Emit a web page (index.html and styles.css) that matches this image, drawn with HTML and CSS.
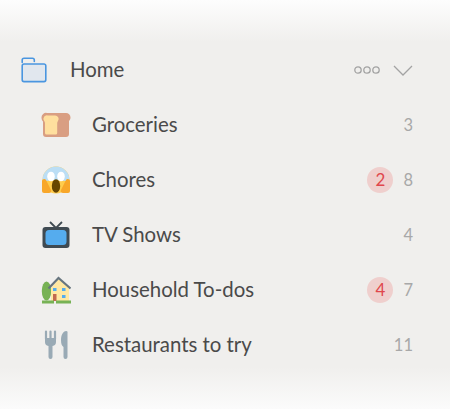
FILE: index.html
```html
<!DOCTYPE html>
<html lang="en">
<head>
  <meta charset="UTF-8" />
  <meta name="viewport" content="width=device-width, initial-scale=1.0" />
  <title>Lists</title>
  <link rel="stylesheet" href="styles.css">
</head>
<body>
  <div class="panel">
    <div class="row home">
      <svg class="folder" width="26" height="26" viewBox="0 0 26 26">
        <path d="M1 7H25V22.500a2 2 0 0 1-2 2H3a2 2 0 0 1-2-2Z" fill="#e1e7ee"/>
        <path d="M1.200 5.500V3A1.800 1.800 0 0 1 3 1.200H11.500A1.800 1.800 0 0 1 13.300 3V4.500" fill="none" stroke="#4a96e0" stroke-width="1.600" stroke-linecap="round"/>
        <path d="M3 7H23a1.800 1.800 0 0 1 1.800 1.800V22.800a1.800 1.800 0 0 1-1.800 1.800H3a1.800 1.800 0 0 1-1.800-1.800V8.800A1.800 1.800 0 0 1 3 7Z" fill="none" stroke="#4a96e0" stroke-width="1.600"/>
      </svg>
      <span class="name">Home</span>
      <svg class="more" width="26" height="8" viewBox="0 0 26 8">
        <g fill="none" stroke="#a3a3a3" stroke-width="1.300">
          <circle cx="4" cy="4" r="3.200"/><circle cx="13" cy="4" r="3.200"/><circle cx="22" cy="4" r="3.200"/>
        </g>
      </svg>
      <svg class="chevron" width="20" height="11" viewBox="0 0 20 11">
        <path d="M1 1L10 10L19 1" fill="none" stroke="#a3a3a3" stroke-width="1.300"/>
      </svg>
    </div>

    <div class="row child">
      <svg class="icon" width="30" height="26" viewBox="0 0 30 26">
        <path d="M6 1H25a4.500 4.500 0 0 1 4.500 4.500c0 2-1 3-1.500 3.500V22a3 3 0 0 1-3 3H5a3 3 0 0 1-3-3V9.500C1 8.500 .5 7 .5 5.500A4.500 4.500 0 0 1 6 1Z" fill="#d99e82"/>
        <path d="M7 3.500H14a3.500 3.500 0 0 1 3 5.500c-.5.7-.8 1.200-.8 2V21a1.500 1.500 0 0 1-1.500 1.500H5.500A1.500 1.500 0 0 1 4 21V11c0-.8-.3-1.300-.8-2A3.500 3.500 0 0 1 7 3.500Z" fill="#ffdf9e"/>
      </svg>
      <span class="name">Groceries</span>
      <span class="count">3</span>
    </div>

    <div class="row child">
      <svg class="icon" width="30" height="28" viewBox="0 0 30 28">
        <circle cx="15" cy="14" r="13.500" fill="#ffcc4d"/>
        <path d="M1.500 14a13.500 13.500 0 0 1 27 0C25 16 22 14 15 14S5 16 1.500 14Z" fill="#bbdef5"/>
        <ellipse cx="10" cy="10.500" rx="3.800" ry="4.800" fill="#fff"/>
        <ellipse cx="20" cy="10.500" rx="3.800" ry="4.800" fill="#fff"/>
        <ellipse cx="15" cy="20" rx="4.200" ry="6.800" fill="#664500"/>
        <path d="M1 25V15c0-2 3-3 4-1l5 10c.8 2-.5 3-2 3H3Q1 27 1 25Z" fill="#f8a72a"/>
        <path d="M29 25V15c0-2-3-3-4-1l-5 10c-.8 2 .5 3 2 3h5Q29 27 29 25Z" fill="#f8a72a"/>
      </svg>
      <span class="name">Chores</span>
      <span class="badge">2</span>
      <span class="count">8</span>
    </div>

    <div class="row child">
      <svg class="icon" width="28" height="28" viewBox="0 0 28 28">
        <path d="M8 1L14 7L20 1" fill="none" stroke="#3f4a52" stroke-width="1.800"/>
        <rect x="0.500" y="6" width="27" height="21" rx="3" fill="#3f4a52"/>
        <rect x="3.500" y="9" width="21" height="15" rx="3.500" fill="#55acee"/>
      </svg>
      <span class="name">TV Shows</span>
      <span class="count">4</span>
    </div>

    <div class="row child">
      <svg class="icon" width="30" height="28" viewBox="0 0 30 28">
        <ellipse cx="5.500" cy="15" rx="4.700" ry="9.500" fill="#77b255"/>
        <path d="M10 12L17.500 3L28 12V25H10Z" fill="#ffe8a3"/>
        <path d="M7.500 12.500L17.500 2L29.500 12.500" fill="none" stroke="#67757f" stroke-width="2.200"/>
        <rect x="12" y="12" width="3.500" height="3" fill="#55acee"/>
        <rect x="21" y="12" width="3.500" height="3" fill="#55acee"/>
        <rect x="21" y="19" width="3.500" height="3" fill="#55acee"/>
        <rect x="12" y="18" width="3.500" height="7" fill="#c1694f"/>
        <rect x="1" y="24.500" width="12" height="3" fill="#77b255"/>
        <rect x="15" y="24.500" width="15" height="3" fill="#77b255"/>
      </svg>
      <span class="name">Household To-dos</span>
      <span class="badge">4</span>
      <span class="count">7</span>
    </div>

    <div class="row child">
      <svg class="icon" width="30" height="30" viewBox="0 0 30 30">
        <path d="M5 1.500V9M9.500 1.500V9M14 1.500V9" stroke="#99aab5" stroke-width="2.200" stroke-linecap="round"/>
        <path d="M4 8H15V12a4 4 0 0 1-3.500 4V27a2 2 0 0 1-4 0V16A4 4 0 0 1 4 12Z" fill="#99aab5"/>
        <path d="M20 10C20 4 23 1 25 1S26.500 2 26.500 3V27a2 2 0 0 1-4 0V17C21 16 20 14 20 10Z" fill="#99aab5"/>
      </svg>
      <span class="name">Restaurants to try</span>
      <span class="count">11</span>
    </div>

    <div class="fade top"></div>
    <div class="fade bottom"></div>
  </div>
</body>
</html>
```

FILE: styles.css
```css
*{
  padding: 0;
  margin: 0;
  box-sizing: border-box;
}
body{
  width: 450px;
  height: 409px;
  overflow: hidden;
  background-color: #f0efed;
  font-family: Lato, "Open Sans", sans-serif;
}
.panel{
  position: relative;
  height: 409px;
  padding: 42px 37px 0 21px;
}
.row{
  display: flex;
  align-items: center;
  height: 55px;
}
.child{
  padding-left: 20px;
}
.name{
  flex: 1;
  margin-top: -1px;
  font-size: 20.4px;
  color: #4a4a4a;
}
.home .name{
  margin-left: 23px;
}
.child .name{
  margin-left: 21px;
}
.child .icon{
  flex: none;
  width: 30px;
}
.more{
  margin-right: 13px;
}
.chevron{
  margin-top: 2px;
}
.count{
  font-size: 16.5px;
  color: #a8a8a8;
}
.badge{
  display: flex;
  align-items: center;
  justify-content: center;
  width: 26px;
  height: 26px;
  margin-right: 10px;
  border-radius: 50%;
  background-color: #efcfcd;
  color: #e0474c;
  font-size: 17px;
}
.fade{
  position: absolute;
  left: 0;
  width: 100%;
}
.fade.top{
  top: 0;
  height: 42px;
  background: linear-gradient(#fdfdfd, #f0efed);
}
.fade.bottom{
  bottom: 0;
  height: 42px;
  background: linear-gradient(#f0efed, #fbfbfb);
}
```
